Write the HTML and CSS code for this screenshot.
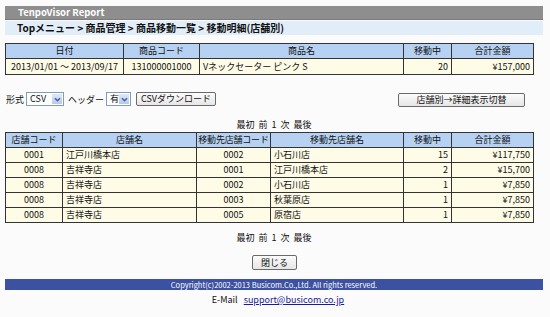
FILE: index.html
```html
<!DOCTYPE html>
<html lang="ja">
<head>
<meta charset="utf-8">
<title>TenpoVisor Report</title>
<link rel="stylesheet" href="styles.css">
</head>
<body>
<div class="page">
  <div class="titlebar">TenpoVisor Report</div>
  <div class="crumb">Topメニュー &gt; 商品管理 &gt; 商品移動一覧 &gt; 移動明細(店舗別)</div>

  <table class="grid summary">
    <colgroup><col style="width:118px"><col style="width:76px"><col style="width:204px"><col style="width:48px"><col style="width:82px"></colgroup>
    <tr class="head"><th>日付</th><th>商品コード</th><th>商品名</th><th>移動中</th><th>合計金額</th></tr>
    <tr class="row tall"><td class="c">2013/01/01 ～ 2013/09/17</td><td class="c">131000001000</td><td>Vネックセーター ピンク S</td><td class="r">20</td><td class="r">¥157,000</td></tr>
  </table>

  <div class="tools">
    <div class="left">
      <span class="lbl">形式</span>
      <span class="sel w37"><span class="val">CSV</span><span class="arr"><svg width="9" height="9" viewBox="0 0 9 9"><path d="M2 3.2 L4.5 5.7 L7 3.2" fill="none" stroke="#4d6185" stroke-width="1.6"/></svg></span></span>
      <span class="lbl">ヘッダー</span>
      <span class="sel w24"><span class="val">有</span><span class="arr"><svg width="9" height="9" viewBox="0 0 9 9"><path d="M2 3.2 L4.5 5.7 L7 3.2" fill="none" stroke="#4d6185" stroke-width="1.6"/></svg></span></span>
      <span class="btn b80">CSVダウンロード</span>
    </div>
    <span class="btn b127">店舗別→詳細表示切替</span>
  </div>

  <div class="pager p1">最初&nbsp;&nbsp;前&nbsp;&nbsp;1&nbsp;&nbsp;次&nbsp;&nbsp;最後</div>

  <table class="grid detail">
    <colgroup><col style="width:57px"><col style="width:134px"><col style="width:74px"><col style="width:133px"><col style="width:48px"><col style="width:82px"></colgroup>
    <tr class="head"><th>店舗コード</th><th>店舗名</th><th class="tight">移動先店舗コード</th><th>移動先店舗名</th><th>移動中</th><th>合計金額</th></tr>
    <tr class="row"><td class="c">0001</td><td>江戸川橋本店</td><td class="c">0002</td><td>小石川店</td><td class="r">15</td><td class="r">¥117,750</td></tr>
    <tr class="row"><td class="c">0008</td><td>吉祥寺店</td><td class="c">0001</td><td>江戸川橋本店</td><td class="r">2</td><td class="r">¥15,700</td></tr>
    <tr class="row"><td class="c">0008</td><td>吉祥寺店</td><td class="c">0002</td><td>小石川店</td><td class="r">1</td><td class="r">¥7,850</td></tr>
    <tr class="row"><td class="c">0008</td><td>吉祥寺店</td><td class="c">0003</td><td>秋葉原店</td><td class="r">1</td><td class="r">¥7,850</td></tr>
    <tr class="row"><td class="c">0008</td><td>吉祥寺店</td><td class="c">0005</td><td>原宿店</td><td class="r">1</td><td class="r">¥7,850</td></tr>
  </table>

  <div class="pager p2">最初&nbsp;&nbsp;前&nbsp;&nbsp;1&nbsp;&nbsp;次&nbsp;&nbsp;最後</div>

  <div class="closewrap"><span class="btn b45">閉じる</span></div>

  <div class="footer">Copyright(c)2002-2013 Busicom.Co.,Ltd. All rights reserved.</div>
  <div class="mail">E-Mail&nbsp;&nbsp;&nbsp;<a href="#">support@busicom.co.jp</a></div>
</div>
</body>
</html>
```

FILE: styles.css
```css
html, body {
  margin: 0;
  padding: 0;
  background: #fbfbfb;
}
body {
  font-family: "Noto Sans CJK JP", "Liberation Sans", sans-serif;
  font-size: 9px;
  color: #111;
}
.page {
  width: 538px;
  padding: 6px 0 0 5px;
}
.titlebar {
  height: 13px;
  line-height: 13px;
  background: #8e8e8e;
  color: #fff;
  font-weight: bold;
  font-size: 9.5px;
  padding-left: 13px;
  border-bottom: 1px solid #7a7a7a;
}
.crumb {
  margin-top: 1px;
  height: 14px;
  line-height: 14px;
  background: #e1edf9;
  color: #111;
  font-weight: bold;
  font-size: 10px;
  padding-left: 12px;
}
.grid {
  border-collapse: collapse;
  table-layout: fixed;
  width: 528px;
  border: 1px solid #222;
}
.grid th, .grid td {
  border: 1px solid #333;
  padding: 0 3px;
  font-size: 9px;
  white-space: nowrap;
  overflow: hidden;
}
.grid th {
  background: #b7d1f2;
  font-weight: normal;
  height: 14px;
  line-height: 14px;
  text-align: center;
}
.grid th.tight {
  padding: 0;
  letter-spacing: -0.2px;
}
.grid td {
  background: #fefbe7;
  height: 14px;
  line-height: 14px;
}
.grid tr.tall td {
  height: 15px;
  line-height: 15px;
}
.grid td.c { text-align: center; }
.grid td.r { text-align: right; }
.summary {
  margin-top: 8px;
}
.tools {
  margin-top: 16px;
  width: 520px;
  display: flex;
  justify-content: space-between;
  align-items: center;
}
.left {
  display: flex;
  align-items: center;
}
.lbl {
  margin-left: 1px;
  margin-right: 2px;
}
.sel {
  display: inline-flex;
  align-items: center;
  justify-content: space-between;
  height: 12px;
  border: 1px solid #7f9db9;
  background: #fff;
  margin-right: 3px;
  box-sizing: content-box;
}
.sel .val { padding-left: 3px; line-height: 12px; }
.sel .arr {
  width: 10px;
  height: 10px;
  margin-right: 1px;
  background: linear-gradient(#dfe8fb, #b5c8f2);
  display: flex;
  align-items: center;
  justify-content: center;
}
.w37 { width: 36px; }
.w24 { width: 23px; margin-right: 5px; }
.btn {
  display: inline-block;
  box-sizing: border-box;
  height: 14px;
  line-height: 12px;
  text-align: center;
  border: 1px solid #6a6a6a;
  border-radius: 2px;
  background: linear-gradient(#fbfbfb, #e6e6e6);
  font-size: 9px;
  color: #111;
}
.b80 { width: 80px; }
.b127 { width: 127px; margin-top: 2px; }
.b45 { width: 45px; height: 15px; line-height: 13px; }
.pager {
  text-align: center;
  width: 538px;
  line-height: 12px;
}
.p1 { margin-top: 12px; margin-bottom: 1px; }
.p2 { margin-top: 9px; }
.closewrap {
  margin-top: 11px;
  padding-left: 247px;
  height: 15px;
}
.footer {
  margin-top: 9px;
  height: 11px;
  line-height: 11px;
  background: #3c51a2;
  color: #fff;
  font-size: 7.5px;
  text-align: center;
}
.mail {
  margin-top: 3px;
  text-align: center;
  width: 538px;
  padding-left: 8px;
  box-sizing: border-box;
  font-size: 9px;
}
.mail a {
  color: #1a1a9c;
}
```
